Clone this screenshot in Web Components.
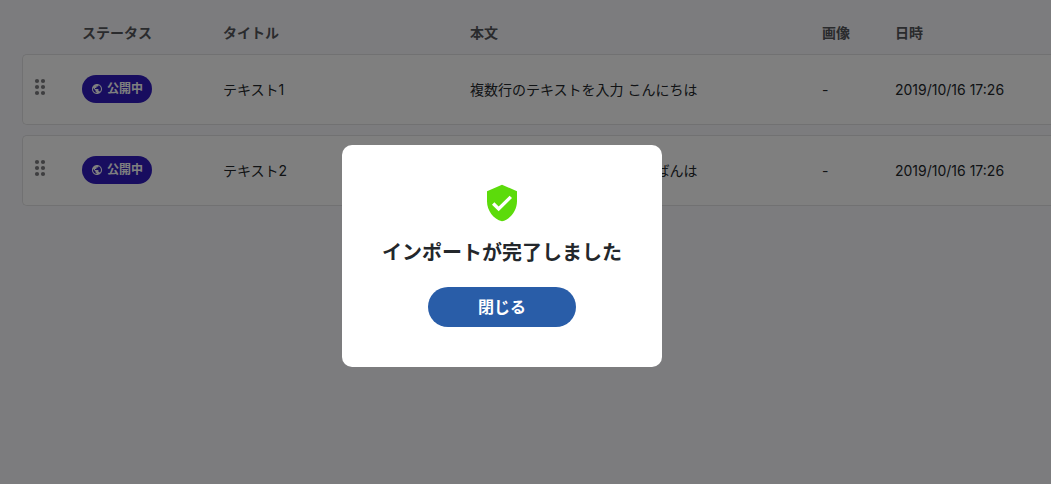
<!DOCTYPE html>
<html lang="ja">
<head>
<meta charset="utf-8">
<meta name="viewport" content="width=device-width, initial-scale=1">
<title>インポート</title>
<style>
body { margin: 0; background: #f8f8fc; font-family: Inter, "Noto Sans CJK JP", sans-serif; font-size: 14px; line-height: 20px; color: #23272b; }
</style>
</head>
<body>
<content-page></content-page>
<script>
class ShadowElement extends HTMLElement {
  constructor() {
    super();
    this.attachShadow({ mode: 'open' }).innerHTML = this.constructor.markup;
  }
}

customElements.define('drag-handle', class extends ShadowElement {
  static markup = `
    <style>
      :host { display: block; width: 12px; height: 18px; }
      svg { display: block; fill: #7d7d80; }
    </style>
    <svg width="12" height="18" viewBox="0 0 12 18" aria-hidden="true">
      <circle cx="3" cy="3" r="2.1"/><circle cx="9" cy="3" r="2.1"/>
      <circle cx="3" cy="9" r="2.1"/><circle cx="9" cy="9" r="2.1"/>
      <circle cx="3" cy="15" r="2.1"/><circle cx="9" cy="15" r="2.1"/>
    </svg>`;
});

customElements.define('status-badge', class extends ShadowElement {
  static markup = `
    <style>
      :host { display: inline-flex; align-items: center; gap: 4px; box-sizing: border-box; height: 28px; padding: 0 9px; border-radius: 14px; background: #301bbe; color: #fff; font-size: 12px; font-weight: 700; line-height: 28px; white-space: nowrap; }
      svg { display: block; fill: currentColor; }
    </style>
    <svg width="12" height="12" viewBox="0 0 24 24" aria-hidden="true"><path d="M12 2C6.48 2 2 6.48 2 12s4.48 10 10 10 10-4.48 10-10S17.52 2 12 2zm-1 17.93c-3.95-.49-7-3.85-7-7.93 0-.62.08-1.21.21-1.79L9 15v1c0 1.1.9 2 2 2v1.93zm6.9-2.54c-.26-.81-1-1.39-1.9-1.39h-1v-3c0-.55-.45-1-1-1H8v-2h2c.55 0 1-.45 1-1V7h2c1.1 0 2-.9 2-2v-.41c2.93 1.19 5 4.06 5 7.41 0 2.08-.8 3.97-2.1 5.39z"/></svg>
    <span><slot></slot></span>`;
});

customElements.define('content-table', class extends ShadowElement {
  static markup = `
    <style>
      :host { display: block; padding: 12px 0 0 22px; overflow: hidden; }
      table { width: calc(100% + 40px); table-layout: fixed; border-collapse: separate; border-spacing: 0 10px; }
      .handle { width: 60px; } .status { width: 141px; } .title { width: 247px; }
      .text { width: 352px; } .image { width: 73px; }
      th, td { padding: 0; text-align: left; white-space: nowrap; }
      th { height: 22px; color: #55565b; font-weight: 700; }
      td { box-sizing: border-box; height: 71px; background: #fff; border: solid #e3e3e5; border-width: 1px 0; }
      td:first-child { border-left-width: 1px; border-radius: 5px 0 0 5px; padding-left: 11px; }
      drag-handle { margin-bottom: 6px; }
      status-badge { vertical-align: middle; margin-bottom: 2px; }
    </style>
    <table>
      <colgroup><col class="handle"><col class="status"><col class="title"><col class="text"><col class="image"><col></colgroup>
      <thead><tr><th></th><th scope="col">ステータス</th><th scope="col">タイトル</th><th scope="col">本文</th><th scope="col">画像</th><th scope="col">日時</th></tr></thead>
      <tbody>
        <tr><td><drag-handle></drag-handle></td><td><status-badge>公開中</status-badge></td><td>テキスト1</td><td>複数行のテキストを入力 こんにちは</td><td>-</td><td>2019/10/16 17:26</td></tr>
        <tr><td><drag-handle></drag-handle></td><td><status-badge>公開中</status-badge></td><td>テキスト2</td><td>複数行のテキストを入力 こんばんは</td><td>-</td><td>2019/10/16 17:26</td></tr>
      </tbody>
    </table>`;
});

customElements.define('modal-dialog', class extends ShadowElement {
  static markup = `
    <style>
      :host { position: fixed; inset: 0; display: grid; place-items: center; box-sizing: border-box; padding: 28px 47px 0 0; background: rgba(0, 0, 0, .5); }
      section { box-sizing: border-box; width: 320px; padding: 38px 40px 40px; border-radius: 10px; background: #fff; display: flex; flex-direction: column; align-items: center; }
      svg { display: block; fill: #5cdb0b; }
      h2 { margin: 14px 0 18px; font-size: 20px; line-height: 32px; font-weight: 700; white-space: nowrap; }
      button { width: 148px; height: 40px; padding: 0; border: 0; border-radius: 20px; background: #295da8; color: #fff; font: inherit; font-size: 16px; font-weight: 700; }
    </style>
    <section role="dialog" aria-modal="true" aria-labelledby="heading">
      <svg width="40" height="40" viewBox="0 0 24 24" aria-hidden="true"><path d="M12 1L3 5v6c0 5.55 3.84 10.74 9 12 5.16-1.26 9-6.45 9-12V5l-9-4zm-2 16l-4-4 1.410-1.410L10 14.170l6.590-6.590L18 9l-8 8z"/></svg>
      <h2 id="heading"><slot></slot></h2>
      <button type="button">閉じる</button>
    </section>`;
});

customElements.define('content-page', class extends ShadowElement {
  static markup = `
    <style>:host { display: block; min-height: 100vh; }</style>
    <main><content-table></content-table></main>
    <modal-dialog>インポートが完了しました</modal-dialog>`;
});
</script>
</body>
</html>
